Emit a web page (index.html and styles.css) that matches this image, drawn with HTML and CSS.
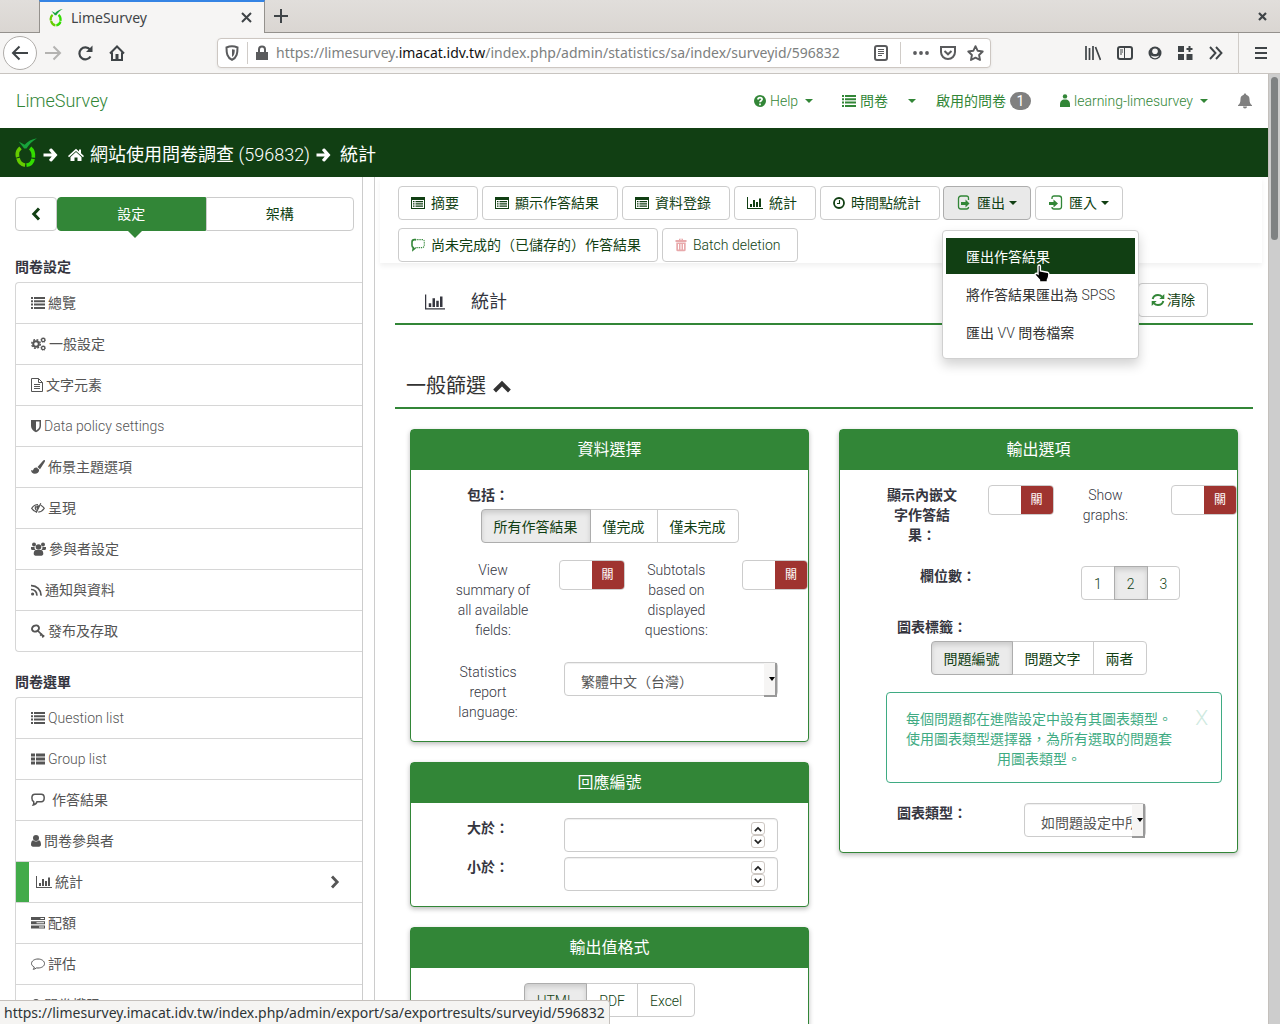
FILE: index.html
```html
<!DOCTYPE html>
<html lang="zh-Hant-TW">
<head>
<meta charset="utf-8">
<meta name="viewport" content="width=device-width, initial-scale=1">
<title>LimeSurvey</title>
<link rel="stylesheet" href="styles.css">
</head>
<body>
<svg class="sprite" aria-hidden="true">
  <symbol id="i-list" viewBox="0 0 14 14"><path d="M0 1h2v2H0zM3 1h11v2H3zM0 4.300h2v2H0zM3 4.300h11v2H3zM0 7.600h2v2H0zM3 7.600h11v2H3zM0 11h2v2H0zM3 11h11v2H3z"/></symbol>
  <symbol id="i-thlist" viewBox="0 0 14 14"><path d="M0 1.500h4v3H0zM5 1.500h9v3H5zM0 5.500h4v3H0zM5 5.500h9v3H5zM0 9.500h4v3H0zM5 9.500h9v3H5z"/></symbol>
  <symbol id="i-listalt" viewBox="0 0 14 14"><path fill-rule="evenodd" d="M0 1h14v12H0zM1 4v8h12V4zM2 5h1.500v1.300H2zM4.500 5H12v1.300H4.500zM2 7.200h1.500v1.300H2zM4.500 7.200H12v1.300H4.500zM2 9.400h1.500v1.300H2zM4.500 9.400H12v1.300H4.500z"/></symbol>
  <symbol id="i-bars" viewBox="0 0 16 14"><path d="M0 1h1v11h15v1H0zM3 8h2v3H3zM6 4h2v7H6zM9 6h2v5H9zM12 2.500h2V11h-2z"/></symbol>
  <symbol id="i-cogs" viewBox="0 0 15 14"><circle cx="5" cy="7" r="2.800" fill="none" stroke="currentColor" stroke-width="2"/><circle cx="5" cy="7" r="4.300" fill="none" stroke="currentColor" stroke-width="1.400" stroke-dasharray="1.900 1.480"/><circle cx="12.200" cy="3" r="1.700" fill="none" stroke="currentColor" stroke-width="1.300"/><circle cx="12.200" cy="11" r="1.700" fill="none" stroke="currentColor" stroke-width="1.300"/><circle cx="12.200" cy="3" r="2.500" fill="none" stroke="currentColor" stroke-width=".6" stroke-dasharray="1 .96"/><circle cx="12.200" cy="11" r="2.500" fill="none" stroke="currentColor" stroke-width=".6" stroke-dasharray="1 .96"/></symbol>
  <symbol id="i-file" viewBox="0 0 12 14"><path fill="none" stroke="currentColor" d="M.5.5h7l4 4v9H.5zM7.500.5v4h4M3 6.500h6M3 8.500h6M3 10.500h6"/></symbol>
  <symbol id="i-shield" viewBox="0 0 10 14"><path fill-rule="evenodd" d="M0 1h10v6c0 3-2.300 4.900-5 6.300C2.300 11.900 0 10 0 7zM5 2.500v9C7 10.200 8.500 9 8.500 7V2.500z"/></symbol>
  <symbol id="i-brush" viewBox="0 0 14 14"><path d="M13.800.2c.5.500 0 1.500-.3 2L9 9.200 6.500 7 12 .8c.5-.5 1.300-1.100 1.800-.6zM5.700 7.600l2.500 2.200c0 2.500-2 4-4.400 4C1.500 13.800.3 12.500 0 10c1 .7 2 .6 2.400-.4.500-1.300 1.700-2.300 3.300-2z"/></symbol>
  <symbol id="i-eye" viewBox="0 0 14 14"><path fill="none" stroke="currentColor" stroke-width="1.200" d="M5.500 11C3.500 10.500 1.800 9 .7 7.300 2.200 5 4.400 3.500 7 3.500M9.800 4.300c1.400.7 2.600 1.700 3.500 3-1.400 2.200-3.400 3.600-6 3.900M4.800 5.300c-1 1.900-.3 3.400 1.300 4.300M9.800 2.200l-4.600 9.600"/><path d="M5.600 4.600 8.600 4.200 6.800 8.500C5.300 7.700 4.800 6 5.600 4.600z"/></symbol>
  <symbol id="i-group" viewBox="0 0 15 14"><circle cx="3" cy="2.500" r="2"/><circle cx="12" cy="2.500" r="2"/><circle cx="7.500" cy="5" r="2.800"/><path d="M0 5h3.600C3.400 6.500 3.900 7.500 4.800 8H1.500C.4 8 0 7.400 0 6.500zM15 5h-3.600c.2 1.500-.3 2.500-1.200 3h3.300c1.100 0 1.500-.6 1.500-1.500zM4.700 8h5.600c1.600.5 2 2.400 2 3.800 0 1-.8 1.900-1.800 1.900h-6c-1 0-1.800-.9-1.800-1.900 0-1.400.4-3.300 2-3.800z"/></symbol>
  <symbol id="i-rss" viewBox="0 0 11 14"><circle cx="1.600" cy="11" r="1.600"/><path fill="none" stroke="currentColor" stroke-width="1.700" d="M0 6.500A5.500 5.500 0 0 1 5.800 12.600M0 2.700A9.500 9.500 0 0 1 10 12.600"/></symbol>
  <symbol id="i-key" viewBox="0 0 14 14"><ellipse cx="4.500" cy="4.500" rx="3.600" ry="3" fill="none" stroke="currentColor" stroke-width="1.900" transform="rotate(-30 4.500 4.500)"/><path fill="none" stroke="currentColor" stroke-width="1.700" d="M6.500 6.500l5.800 5.600M9.200 11.700l1.900-2M11.200 13.400l2-2"/></symbol>
  <symbol id="i-comment" viewBox="0 0 14 14"><path fill="none" stroke="currentColor" stroke-width="1.500" d="M4 1.300h6.200c2 0 3 1.400 3 3.500s-1 4-3 4H6c-.5 1.700-1.700 2.900-3.800 3.200.6-1.100.8-2.100.5-3.300C1.400 8 .9 6.600.9 5c0-2.300 1.200-3.700 3.100-3.700z"/></symbol>
  <symbol id="i-bubble" viewBox="0 0 14 14"><path fill="none" stroke="currentColor" d="M7 2c3.600 0 6.500 2 6.500 4.600S10.600 11 7 11c-.6 0-1 0-1.500-.1-1 .9-2 1.300-3.300 1.400.6-.7 1-1.300 1.100-2.200C1.600 9.200.5 8 .5 6.600.5 4 3.400 2 7 2z"/></symbol>
  <symbol id="i-user" viewBox="0 0 10 14"><circle cx="5" cy="4" r="3"/><path d="M2.200 6.300c1.700 1.600 3.900 1.600 5.600 0C9.500 6.700 10 8.700 10 10.600c0 1.300-.8 2.200-2 2.200H2c-1.200 0-2-.9-2-2.200 0-1.900.5-3.900 2.200-4.300z"/></symbol>
  <symbol id="i-tasks" viewBox="0 0 14 14"><path fill-rule="evenodd" d="M0 1h14v3H0zM9.500 2h3.500v1H9.500zM0 5.300h14v3H0zM5.500 6.300H13v1H5.500zM0 9.600h14v3H0zM8 10.600h5v1H8z"/></symbol>
  <symbol id="i-lock" viewBox="0 0 10 14"><path fill-rule="evenodd" d="M1.500 6V4.500a3.500 3.500 0 0 1 7 0V6H10v7H0V6zM3.500 6h3V4.500a1.500 1.500 0 0 0-3 0z"/></symbol>
  <symbol id="i-clock" viewBox="0 0 12 14"><circle cx="6" cy="7" r="5" fill="none" stroke="currentColor" stroke-width="1.800"/><path fill="none" stroke="currentColor" stroke-width="1.100" d="M6.500 4v3.500H4"/></symbol>
  <symbol id="i-export" viewBox="0 0 14 16"><path fill="none" stroke="currentColor" stroke-width="1.300" d="M11.500 5V3c0-1.300-.8-2-2-2H4C2.500 1 1.500 2 1.500 3.500v8C1.500 13 2.500 14 4 14h5.500c1.200 0 2-.7 2-2"/><path d="M4 7h4.500V4.500L12.500 8.500l-4 4V10H4z"/></symbol>
  <symbol id="i-import" viewBox="0 0 14 16"><path fill="none" stroke="currentColor" stroke-width="1.300" d="M3 4V3c0-1.300.8-2 2-2h5c1.500 0 2.500 1 2.500 2.500v8c0 1.500-1 2.500-2.500 2.500H5c-1.200 0-2-.7-2-2"/><path d="M0 7h4.500V4.500L9 8.500l-4.500 4V10H0z"/></symbol>
  <symbol id="i-dashed" viewBox="0 0 14 14"><path fill="none" stroke="currentColor" stroke-width="1.600" d="M5 1.600H3.500C1.700 1.600 1 2.500 1 4v3.500c0 1 .5 1.700 1.300 2L2 12l2.500-2"/><path fill="none" stroke="currentColor" stroke-width="1.200" stroke-dasharray="1.300 .9" d="M4 1.600h7.500c1 0 1.800.9 1.800 2V7c0 1-.6 2.500-1.800 2.700H4"/></symbol>
  <symbol id="i-trash" viewBox="0 0 12 14"><path fill-rule="evenodd" d="M1 2h3V.8h4V2h3.500v2H.5V2zM5 2h2v-.4H5zM1.300 4.500h9.400V12c0 .7-.5 1.200-1.200 1.200h-7c-.7 0-1.200-.5-1.200-1.200zM3 6v5.500h1V6zM5.500 6v5.500h1V6zM8 6v5.500h1V6z"/></symbol>
  <symbol id="i-refresh" viewBox="0 0 14 14"><path fill="none" stroke="currentColor" stroke-width="2" d="M1.700 6C2.300 3.500 4.400 2 7 2c1.700 0 3 .6 4 1.700M12.300 8c-.6 2.500-2.700 4-5.300 4-1.700 0-3-.6-4-1.700"/><path d="M13.300 1v5h-5zM.7 13V8h5z"/></symbol>
  <symbol id="i-home" viewBox="0 0 16 14"><path d="M8 .8l3 2.700V1.500h2v3.800l3 2.700-1 1.200-7-6.200-7 6.200L0 8z"/><path d="M8 4l5.500 4.900V13H9.500V9.500h-3V13h-4V8.900z"/></symbol>
  <symbol id="i-arrow" viewBox="0 0 14 14"><path d="M6.500.8 8.200.6 14 7l-5.800 6.400-1.700-.2-1-1.500L8.200 8.500H0v-3h8.200L5.500 2.300z"/></symbol>
  <symbol id="i-left" viewBox="0 0 10 14"><path fill="none" stroke="currentColor" stroke-width="3" d="M8 1.500 2.800 7 8 12.500"/></symbol>
  <symbol id="i-right" viewBox="0 0 10 14"><path fill="none" stroke="currentColor" stroke-width="2.800" d="M2 1.500 7.200 7 2 12.500"/></symbol>
  <symbol id="i-up" viewBox="0 0 18 14"><path fill="none" stroke="currentColor" stroke-width="4" d="M1.600 12 9 4.500 16.400 12"/></symbol>
  <symbol id="i-question" viewBox="0 0 12 14"><circle cx="6" cy="7" r="6"/><path fill="none" stroke="#fff" stroke-width="1.700" d="M3.800 5.500c.2-1.300 1-1.900 2.200-1.900 1.300 0 2.100.7 2.100 1.700C8.100 6.700 6 6.700 6 8.300M6 9.500v1.700"/></symbol>
  <symbol id="i-person" viewBox="0 0 10 14"><circle cx="5" cy="2.400" r="2.200"/><path d="M0 13v-2.500C0 7.500 1.500 5.500 5 5.500s5 2 5 5V13z"/></symbol>
  <symbol id="i-bell" viewBox="0 0 14 16"><path d="M7 .5c.7 0 1.200.5 1.200 1.200C10.300 2.300 11.500 4 11.500 6c0 3.500.8 5 2.500 6.300v.7H0v-.7C1.700 11 2.500 9.500 2.500 6c0-2 1.200-3.700 3.300-4.300C5.800 1 6.300.5 7 .5zM5 13.500h4c0 1.300-.8 2-2 2s-2-.7-2-2z"/></symbol>
  <symbol id="i-lime" viewBox="0 0 24 32"><g fill="none" stroke-width="4"><path stroke="#6c0" d="M6 10.500C3 13 2 17 3 20.500M3.300 21.500C4.300 26 7 28.600 11 29.300"/><path stroke="#3d0" d="M12.500 29.300c4-.5 6.500-3 7.300-7M20 21c.5-4.500-.3-8-3.500-10.500"/></g><path fill="#17a43b" d="M4 3.500 10.500 7C14 3.500 18 1 24 0c-5 3-8.500 6.500-11.500 11H10z"/></symbol>
</svg>

<header class="browser">
  <div class="tabstrip">
    <div class="tab"><svg class="fav"><use href="#i-lime"/></svg><span>LimeSurvey</span>
      <button class="bare" aria-label="Close tab"><svg width="11" height="11" viewBox="0 0 11 11"><path fill="none" stroke="currentColor" stroke-width="2" d="M1 1l9 9M10 1l-9 9"/></svg></button></div>
    <button class="bare newtab" aria-label="New tab"><svg width="14" height="14" viewBox="0 0 14 14"><path d="M6 0h2v6h6v2H8v6H6V8H0V6h6z"/></svg></button>
    <button class="bare winclose" aria-label="Close window"><svg width="9" height="9" viewBox="0 0 9 9"><path fill="none" stroke="currentColor" stroke-width="2.200" d="M1 1l7 7M8 1 1 8"/></svg></button>
  </div>
  <div class="toolbar">
    <button class="bare back" aria-label="Back"><svg width="18" height="16" viewBox="0 0 18 16"><path fill="none" stroke="currentColor" stroke-width="2" d="M17 8H2M8.500 1.500 2 8l6.500 6.500"/></svg></button>
    <button class="bare fwd" aria-label="Forward"><svg width="18" height="16" viewBox="0 0 18 16"><path fill="none" stroke="currentColor" stroke-width="2" d="M1 8h15M9.500 1.500 16 8l-6.500 6.500"/></svg></button>
    <button class="bare reload" aria-label="Reload"><svg width="16" height="16" viewBox="0 0 16 16"><path fill="none" stroke="currentColor" stroke-width="2.200" d="M13.500 11.500A6 6 0 1 1 13 4.500"/><path d="M15.500.5V7H9z"/></svg></button>
    <button class="bare house" aria-label="Home"><svg width="16" height="16" viewBox="0 0 16 16"><path fill="none" stroke="currentColor" stroke-width="2" d="M1 8.500 8 1.500l7 7M3 7.500V15h10V7.500"/><path d="M6.500 9h3v6h-3z"/></svg></button>
    <div class="urlbar">
      <svg width="14" height="16" viewBox="0 0 14 16"><path fill="none" stroke="currentColor" stroke-width="2" d="M1.500 2.500C5 1 9 1 12.500 2.500 12.500 8 12 12.500 7 14.800 2 12.500 1.500 8 1.500 2.500z"/><path d="M7 4.200c1 0 2 .2 2.800.5C9.700 8 9.300 10.500 7 12z"/></svg>
      <i class="vline"></i>
      <svg width="12" height="16" viewBox="0 0 12 16"><path fill-rule="evenodd" d="M2 7V4.500a4 4 0 0 1 8 0V7h2v8H0V7zM4 7h4V4.500a2 2 0 0 0-4 0z"/></svg>
      <span class="url">https://limesurvey.<b>imacat.idv.tw</b>/index.php/admin/statistics/sa/index/surveyid/596832</span>
      <svg width="14" height="16" viewBox="0 0 14 16"><path fill="none" stroke="currentColor" stroke-width="2" d="M1 3a2 2 0 0 1 2-2h8a2 2 0 0 1 2 2v10a2 2 0 0 1-2 2H3a2 2 0 0 1-2-2z"/><path fill="none" stroke="currentColor" d="M4 4.500h6M4 6.500h6M4 8.500h6M4 10.500h4"/></svg>
      <i class="vline roomy"></i>
      <svg width="16" height="16" viewBox="0 0 16 16"><circle cx="2" cy="8" r="1.900"/><circle cx="8" cy="8" r="1.900"/><circle cx="14" cy="8" r="1.900"/></svg>
      <svg class="pocket" width="16" height="16" viewBox="0 0 16 16"><path fill="none" stroke="currentColor" stroke-width="2" d="M1 2h14v5a7 7 0 0 1-14 0z"/><path fill="none" stroke="currentColor" stroke-width="2" d="M4.500 6 8 9.300 11.500 6"/></svg>
      <svg width="17" height="16" viewBox="0 0 17 16"><path fill="none" stroke="currentColor" stroke-width="1.900" stroke-linejoin="round" d="M8.500 1.200l2.200 4.600 5 .7-3.600 3.500.9 5-4.500-2.400L4 15l.9-5L1.300 6.500l5-.7z"/></svg>
    </div>
    <div class="tools">
      <svg width="16" height="16" viewBox="0 0 16 16"><path fill="none" stroke="currentColor" stroke-width="1.700" d="M1 1v14M4.500 3v12M8 1v14M10.500 2l5 13"/></svg>
      <svg width="16" height="16" viewBox="0 0 16 16"><rect x="1" y="2" width="14" height="12" rx="2" fill="none" stroke="currentColor" stroke-width="2"/><path fill="none" stroke="currentColor" d="M7.500 2v12M3 5h3M3 7h3M3 9h2"/></svg>
      <svg width="14" height="16" viewBox="0 0 14 16"><circle cx="7" cy="8" r="6.500"/><circle cx="7" cy="6.200" r="2.800" fill="#f6f5f4"/><path fill="#f6f5f4" d="M2.800 10.500c2.500 1.300 6 1.300 8.400 0-1 1.800-2.500 2.700-4.200 2.700s-3.200-.9-4.200-2.700z"/></svg>
      <svg width="15" height="16" viewBox="0 0 15 16"><path d="M0 1h6v6H0zM0 9h6v6H0zM8.500 9h6v6h-6zM10.500 1h2v2h2v2h-2v2h-2V5h-2V3h2z"/></svg>
      <svg width="14" height="16" viewBox="0 0 14 16"><path fill="none" stroke="currentColor" stroke-width="1.900" d="M1 2l5.500 6L1 14M7 2l5.500 6L7 14"/></svg>
      <i class="vline tall"></i>
      <svg width="12" height="16" viewBox="0 0 12 16"><path d="M0 2h12v2H0zM0 7h12v2H0zM0 12h12v2H0z"/></svg>
    </div>
  </div>
</header>

<div class="viewport">
<div class="page">
  <nav class="topnav">
    <a class="brand thin" href="#">LimeSurvey</a>
    <a class="help thin" href="#"><svg class="w12"><use href="#i-question"/></svg>Help<i class="caret"></i></a>
    <a class="surveys" href="#"><svg class="w16"><use href="#i-list"/></svg>問卷</a>
    <a class="more" href="#" aria-label="更多"><i class="caret"></i></a>
    <a class="active-surveys" href="#">啟用的問卷<span class="badge">1</span></a>
    <a class="account thin" href="#"><svg class="w10"><use href="#i-person"/></svg>learning-limesurvey<i class="caret"></i></a>
    <a class="bell" href="#" aria-label="通知"><svg><use href="#i-bell"/></svg></a>
  </nav>
  <div class="crumbs">
    <svg class="logo"><use href="#i-lime"/></svg>
    <svg class="arrow"><use href="#i-arrow"/></svg>
    <a href="#"><svg class="w16"><use href="#i-home"/></svg><span>網站使用問卷調查 <span class="thin">(596832)</span></span></a>
    <svg class="arrow"><use href="#i-arrow"/></svg>
    <span class="here">統計</span>
  </div>

  <div class="columns">
    <aside class="side">
      <div class="side-top">
        <button class="btn collapse" aria-label="收合"><svg class="w10"><use href="#i-left"/></svg></button>
        <div class="side-tabs"><button class="on">設定</button><button>架構</button></div>
      </div>
      <h2>問卷設定</h2>
      <ul class="menu">
        <li><a href="#"><svg class="w14"><use href="#i-list"/></svg>總覽</a></li>
        <li><a href="#"><svg class="w15"><use href="#i-cogs"/></svg>一般設定</a></li>
        <li><a href="#"><svg class="w12"><use href="#i-file"/></svg>文字元素</a></li>
        <li><a class="thin" href="#"><svg class="w10"><use href="#i-shield"/></svg>Data policy settings</a></li>
        <li><a href="#"><svg class="w14"><use href="#i-brush"/></svg>佈景主題選項</a></li>
        <li><a href="#"><svg class="w14"><use href="#i-eye"/></svg>呈現</a></li>
        <li><a href="#"><svg class="w15"><use href="#i-group"/></svg>參與者設定</a></li>
        <li><a href="#"><svg class="w11"><use href="#i-rss"/></svg>通知與資料</a></li>
        <li><a href="#"><svg class="w14"><use href="#i-key"/></svg>發布及存取</a></li>
      </ul>
      <h2>問卷選單</h2>
      <ul class="menu">
        <li><a class="thin" href="#"><svg class="w14"><use href="#i-list"/></svg>Question list</a></li>
        <li><a class="thin" href="#"><svg class="w14"><use href="#i-thlist"/></svg>Group list</a></li>
        <li><a class="wide-gap" href="#"><svg class="w14"><use href="#i-comment"/></svg>作答結果</a></li>
        <li><a href="#"><svg class="w10"><use href="#i-user"/></svg>問卷參與者</a></li>
        <li class="current"><a href="#"><svg class="w16"><use href="#i-bars"/></svg>統計<svg class="w10 go"><use href="#i-right"/></svg></a></li>
        <li><a href="#"><svg class="w14"><use href="#i-tasks"/></svg>配額</a></li>
        <li><a href="#"><svg class="w14"><use href="#i-bubble"/></svg>評估</a></li>
        <li><a href="#"><svg class="w10"><use href="#i-lock"/></svg>問卷權限</a></li>
      </ul>
    </aside>
    <div class="handle"></div>

    <main class="main">
      <div class="actions">
        <button class="btn"><svg class="w14"><use href="#i-listalt"/></svg>摘要</button>
        <button class="btn"><svg class="w14"><use href="#i-listalt"/></svg>顯示作答結果</button>
        <button class="btn"><svg class="w14"><use href="#i-listalt"/></svg>資料登錄</button>
        <button class="btn"><svg class="w16"><use href="#i-bars"/></svg>統計</button>
        <button class="btn"><svg class="w12"><use href="#i-clock"/></svg>時間點統計</button>
        <div class="drop">
          <button class="btn menu-btn open"><svg class="w14 tallicon green"><use href="#i-export"/></svg>匯出<i class="caret"></i></button>
          <div class="dropdown">
            <a class="hover" href="#">匯出作答結果</a>
            <a href="#">將作答結果匯出為 <span class="thin">SPSS</span></a>
            <a href="#">匯出 <span class="thin">VV</span> 問卷檔案</a>
            <svg class="pointer" width="16" height="19" viewBox="0 0 16 19"><path fill="#000" stroke="#fff" stroke-width="1.400" d="M4 2.200C4 1.300 4.600 1 5.200 1s1.200.4 1.200 1.200V7l7 1.200c1 .3 1.500 1 1.500 2 0 2.500-.5 4-1.500 5.600V18H5.500v-2L1.500 11.500C.7 10.500 1 9.300 2.200 9.200c.7 0 1.200.3 1.800.8z"/></svg>
          </div>
        </div>
        <button class="btn menu-btn"><svg class="w14 tallicon green"><use href="#i-import"/></svg>匯入<i class="caret"></i></button>
        <button class="btn snug"><svg class="w14 green"><use href="#i-dashed"/></svg>尚未完成的（已儲存的）作答結果</button>
        <button class="btn snug thin"><svg class="w12 pink"><use href="#i-trash"/></svg>Batch deletion</button>
      </div>

      <div class="content">
        <div class="heading"><h1><svg><use href="#i-bars"/></svg>統計</h1>
          <button class="btn clear"><svg class="w14 green"><use href="#i-refresh"/></svg>清除</button></div>
        <h2 class="filter">一般篩選<svg><use href="#i-up"/></svg></h2>

        <div class="cards">
          <div class="stack">
            <section class="card">
              <h3>資料選擇</h3>
              <div class="body">
                <div class="lone">包括：</div>
                <div class="group" role="radiogroup" aria-label="包括">
                  <label><input type="radio" name="inc" checked>所有作答結果</label><label><input type="radio" name="inc">僅完成</label><label><input type="radio" name="inc">僅未完成</label>
                </div>
                <div class="pair spaced">
                  <label class="name thin" for="sum">View summary of all available fields:</label>
                  <span class="switch"><input type="checkbox" id="sum"><span>關</span></span>
                  <label class="name thin" for="sub">Subtotals based on displayed questions:</label>
                  <span class="switch"><input type="checkbox" id="sub"><span>關</span></span>
                </div>
                <div class="field report">
                  <label class="name thin" for="lang">Statistics report language:</label>
                  <span class="select"><select id="lang"><option>繁體中文（台灣）</option></select></span>
                </div>
              </div>
            </section>
            <section class="card">
              <h3>回應編號</h3>
              <div class="body ids">
                <div class="field"><label class="name" for="gt">大於：</label><span class="number"><input type="number" id="gt"><span class="spin"><button aria-label="增加"><svg><use href="#i-up"/></svg></button><button class="down" aria-label="減少"><svg><use href="#i-up"/></svg></button></span></span></div>
                <div class="field"><label class="name" for="lt">小於：</label><span class="number"><input type="number" id="lt"><span class="spin"><button aria-label="增加"><svg><use href="#i-up"/></svg></button><button class="down" aria-label="減少"><svg><use href="#i-up"/></svg></button></span></span></div>
              </div>
            </section>
            <section class="card">
              <h3>輸出值格式</h3>
              <div class="body">
                <div class="group thin" role="radiogroup" aria-label="輸出值格式">
                  <label><input type="radio" name="fmt" checked>HTML</label><label><input type="radio" name="fmt">PDF</label><label><input type="radio" name="fmt">Excel</label>
                </div>
              </div>
            </section>
          </div>
          <section class="card">
            <h3>輸出選項</h3>
            <div class="body">
              <div class="pair">
                <label class="name bold" for="inline">顯示內嵌文字作答結果：</label>
                <span class="switch"><input type="checkbox" id="inline"><span>關</span></span>
                <label class="name thin" for="graphs">Show graphs:</label>
                <span class="switch"><input type="checkbox" id="graphs"><span>關</span></span>
              </div>
              <div class="cols">
                <div class="bold">欄位數：</div>
                <div class="group thin" role="radiogroup" aria-label="欄位數">
                  <label><input type="radio" name="cols">1</label><label><input type="radio" name="cols" checked>2</label><label><input type="radio" name="cols">3</label>
                </div>
              </div>
              <div class="lone wide">圖表標籤：</div>
              <div class="group" role="radiogroup" aria-label="圖表標籤">
                <label><input type="radio" name="lab" checked>問題編號</label><label><input type="radio" name="lab">問題文字</label><label><input type="radio" name="lab">兩者</label>
              </div>
              <div class="alert"><p>每個問題都在進階設定中設有其圖表類型。使用圖表類型選擇器，為所有選取的問題套用圖表類型。</p><button class="thin" aria-label="關閉">X</button></div>
              <div class="type">
                <label class="bold" for="ctype">圖表類型：</label>
                <span class="select"><select id="ctype"><option>如問題設定中所示</option></select></span>
              </div>
            </div>
          </section>
        </div>
      </div>
    </main>
  </div>
</div>
<div class="scrollbar"><div class="thumb"></div></div>
<div class="status">https://limesurvey.imacat.idv.tw/index.php/admin/export/sa/exportresults/surveyid/596832</div>
</div>
</body>
</html>
```
FILE: styles.css
```css
* { box-sizing: border-box; }
body {
  margin: 0;
  height: 100vh;
  display: flex;
  flex-direction: column;
  overflow: hidden;
  font: 400 14px/20px Roboto, "Noto Sans CJK TC", sans-serif;
  color: #35363f;
  background: #fff;
}
h1, h2, h3, p, ul { margin: 0; padding: 0; }
a { color: inherit; text-decoration: none; }
button, input, select { font: inherit; color: inherit; margin: 0; }
svg { fill: currentColor; flex: none; }
.sprite { position: absolute; width: 0; height: 0; }
.bare { border: 0; background: none; padding: 0; display: flex; align-items: center; justify-content: center; }
.thin { font-weight: 300; }
.bold { font-weight: 700; }

/* icon widths */
.w10, .w11, .w12, .w14, .w15, .w16 { height: 14px; }
.w10 { width: 10px; }
.w11 { width: 11px; }
.w12 { width: 12px; }
.w14 { width: 14px; }
.w15 { width: 15px; }
.w16 { width: 16px; }
.tallicon { height: 16px; }
.green { color: #328637; }
.pink { color: #e8a9ab; }
.caret { border: 4px solid transparent; border-top-color: currentColor; border-bottom: 0; margin-left: 6px; }

/* browser window */
.browser { font-family: "Noto Sans", sans-serif; font-size: 14px; color: #3f4447; flex: none; }
.tabstrip { height: 33px; display: flex; padding-left: 39px; background: linear-gradient(#e1dedb, #dad6d2); border-bottom: 1px solid #94918d; }
.tab {
  width: 226px; height: 33px; display: flex; align-items: center; gap: 8px; padding: 0 12px 0 9px;
  background: #f6f5f4; border: 1px solid #94918d; border-top: 2px solid #3584e4; border-bottom: 0;
}
.tab span { flex: 1; }
.fav { width: 14px; height: 18px; }
.newtab { margin-left: 8px; width: 16px; }
.winclose { margin-left: auto; width: 36px; }
.toolbar { height: 41px; display: flex; align-items: center; padding: 0 13px 0 3px; background: #f6f5f4; border-bottom: 1px solid #c8c4c0; }
.back { width: 34px; height: 34px; border: 1px solid #b0adaa; border-radius: 50%; background: #fff; }
.fwd { width: 18px; margin-left: 7px; color: #b4b3b1; }
.reload { margin-left: 15px; }
.house { margin-left: 16px; }
.urlbar {
  flex: 1; height: 30px; margin-left: 92px; padding: 0 6px 0 7px; display: flex; align-items: center;
  border: 1px solid #cdc7c2; border-radius: 4px; background: #fff; color: #5a5b5d; box-shadow: 0 1px 3px #0001;
}
.vline { width: 1px; height: 22px; background: #d0ccc8; margin: 0 8px; }
.roomy { margin: 0 12px; }
.pocket { margin: 0 11px; }
.url { flex: 1; min-width: 0; margin-left: 8px; color: #7d7f80; white-space: nowrap; overflow: hidden; }
.url b { font-weight: 400; color: #111; }
.tools { display: flex; align-items: center; justify-content: space-between; width: 182px; margin-left: 94px; }
.tall { height: 41px; margin: 0; }

.viewport { flex: 1; min-height: 0; display: flex; position: relative; }
.page { flex: 1; min-width: 0; overflow: hidden; }
.scrollbar { width: 12px; padding: 3px 2px; background: #cdcdcd; border-left: 1px solid #c4c0bc; }
.thumb { height: 163px; border-radius: 4px; background: #7f8283; }
.status {
  position: absolute; left: 0; bottom: 0; z-index: 5; height: 24px; padding: 0 4px; line-height: 24px;
  font-family: "Noto Sans", sans-serif; color: #2e3436; background: #f5f4f2;
  border: 1px solid #c5c0bc; border-width: 1px 1px 0 0; border-radius: 0 3px 0 0; white-space: nowrap;
}

/* page header */
.topnav { height: 54px; display: flex; align-items: center; padding: 0 16px; color: #328637; }
.topnav a { display: flex; align-items: center; gap: 4px; }
.topnav .caret { margin-left: 3px; }
.topnav .brand { font-size: 18px; margin-right: auto; }
.topnav .surveys { margin-left: 28px; gap: 3px; }
.more { margin-left: 16px; }
.topnav .more .caret { margin-left: 4px; }
.active-surveys { margin-left: 20px; }
.badge { background: #808080; color: #fff; border-radius: 10px; line-height: 18px; width: 21px; text-align: center; }
.account { margin-left: 29px; }
.bell { margin-left: 30px; color: #808080; }
.bell svg { width: 14px; height: 16px; }
.crumbs { height: 49px; display: flex; align-items: center; padding: 4px 15px 0; gap: 6px; font-size: 18px; color: #fff; background: #113f13; }
.crumbs a { display: flex; align-items: center; gap: 6px; margin-left: 4px; }
.logo { width: 22px; height: 32px; margin-top: -4px; }
.arrow { width: 15px; height: 14px; }
.here { margin-left: 3px; }

/* side menu */
.columns { display: flex; align-items: stretch; }
.side { width: 362px; padding: 20px 0 0 15px; flex: none; }
.side-top { display: flex; margin-right: 8px; height: 34px; }
.btn {
  display: inline-flex; align-items: center; height: 34px; padding: 0 18px 0 12px; gap: 6px;
  background: #fff; border: 1px solid #ccc; border-radius: 4px; color: #113f13; white-space: nowrap;
}
.collapse { width: 42px; padding: 0; justify-content: center; }
.side-tabs { flex: 1; display: flex; }
.side-tabs button { flex: 1; padding: 0; background: #fff; border: 1px solid #ccc; border-radius: 0 4px 4px 0; color: #113f13; }
.side-tabs .on { background: #328637; border-color: #328637; border-radius: 4px 0 0 4px; color: #fff; position: relative; }
.side-tabs .on::after {
  content: ""; position: absolute; left: 50%; top: 100%; margin-left: -4px;
  border: 8px solid transparent; border-top-color: #328637; border-bottom: 0;
}
.side h2 { font-size: 14px; line-height: 20px; font-weight: 700; margin: 26px 0 5px; }
.menu { list-style: none; border: 1px solid #d6d6d6; border-right: 0; border-radius: 4px 0 0 4px; margin-bottom: 20px; }
.menu li + li { border-top: 1px solid #d6d6d6; }
.side .menu + h2 { margin-top: 0; }
.menu a { display: flex; align-items: center; gap: 3px; height: 40px; padding: 0 22px 0 15px; color: #555; }
.menu .wide-gap { gap: 7px; }
.menu .current a { border-left: 13px solid #42ab4a; padding-left: 7px; }
.go { margin-left: auto; }
.handle { width: 13px; border: 1px solid #ccc; border-width: 0 1px; flex: none; }

/* main area */
.main { flex: 1; min-width: 0; padding: 0 6px 0 5px; }
.actions { display: flex; flex-wrap: wrap; gap: 8px 4px; padding: 9px 18px 1px; box-shadow: 0 3px 5px #0000000f; }
.actions .menu-btn { padding: 0 13px; }
.actions .menu-btn .caret { margin-left: -2px; }
.actions .open { background: #e9e9e9; border-color: #adadad; }
.actions .snug { padding-right: 16px; }
.drop { position: relative; margin-left: -1px; }
.dropdown {
  position: absolute; left: -1px; top: 44px; z-index: 2; width: 197px; padding: 7px 3px 6px;
  background: #fff; border: 1px solid #d0d0d0; border-radius: 4px; box-shadow: 0 6px 12px #0000002d;
}
.dropdown a { display: block; height: 36px; line-height: 38px; margin-bottom: 2px; padding: 0 20px; white-space: nowrap; color: #333; }
.dropdown a.hover { background: #113f13; color: #fff; }
.pointer { position: absolute; left: 91px; top: 33px; }
.content { padding: 20px 9px 0 15px; }
.heading { display: flex; justify-content: space-between; padding-bottom: 6px; padding-right: 45px; border-bottom: 2px solid #328637; }
.heading h1 { display: flex; align-items: center; gap: 26px; padding: 4px 0 0 30px; font-size: 18px; font-weight: 400; }
.heading h1 svg { width: 20px; height: 18px; }
.heading .btn { padding: 0 12px; gap: 2px; }
.filter { display: flex; align-items: center; gap: 7px; padding: 45px 11px 5px; font-size: 20px; line-height: 32px; font-weight: 400; color: #333; border-bottom: 2px solid #328637; }
.filter svg { width: 18px; height: 14px; }

/* cards */
.cards { display: grid; grid-template-columns: 1fr 1fr; gap: 30px; align-items: start; padding: 20px 15px; }
.stack { display: grid; gap: 20px; }
.card { border: 1px solid #328637; border-radius: 4px; background: #fff; box-shadow: 0 2px 5px #0004; min-width: 0; }
.card h3 { height: 40px; line-height: 40px; font-size: 16px; font-weight: 400; text-align: center; color: #fff; background: #328637; }
.body { padding: 15px 0; text-align: center; }
.lone { width: 154px; font-weight: 700; margin-bottom: 4px; }
.lone.wide { width: 184px; margin-top: 17px; }
.group { display: flex; justify-content: center; }
.group label { height: 34px; line-height: 34px; padding: 0 12px; border: 1px solid #ccc; color: #113f13; position: relative; }
.group label + label { margin-left: -1px; }
.group label:first-child { border-radius: 4px 0 0 4px; }
.group label:last-child { border-radius: 0 4px 4px 0; }
.group label:has(:checked) { background: #ebebeb; border-color: #adadad; box-shadow: inset 0 3px 5px #0002; z-index: 1; }
.group input { position: absolute; opacity: 0; width: 1px; height: 1px; }
.pair { display: grid; grid-template-columns: 104fr 80fr 104fr 65fr; padding-left: 44px; align-items: start; }
.name { width: 76px; }
.spaced { margin-top: 17px; margin-bottom: 22px; }
.switch { display: block; width: 66px; height: 30px; border: 1px solid #ccc; border-radius: 4px; position: relative; overflow: hidden; background: #fff; }
.switch input { position: absolute; inset: 0; width: 100%; height: 100%; opacity: 0; }
.switch span { display: block; margin-left: 32px; line-height: 28px; font-size: 12px; color: #fff; background: #9f3430; }
.field { display: grid; grid-template-columns: 114px 1fr; padding: 0 30px 0 39px; align-items: start; }
.report { height: 64px; }
.ids { display: grid; gap: 5px; }
.ids .name { font-weight: 700; }
.select, .number { display: block; position: relative; }
.select select, .number input {
  width: 100%; height: 34px; border: 1px solid #ccc; border-radius: 4px; background: #fff; color: #555;
  box-shadow: inset 0 1px 1px #0001; appearance: none; display: block;
}
.select select { padding: 5px 12px 0 16px; }
.number input { appearance: textfield; padding: 6px 12px; }
.select::before { content: ""; position: absolute; right: 1px; top: 1px; width: 11px; height: 32px; background: #f6f5f4; border: 2px solid #999; border-width: 0 2px 2px 0; }
.select::after { content: ""; position: absolute; right: 3px; top: 15px; border: 3px solid transparent; border-top: 4px solid #000; border-bottom: 0; }
.spin { position: absolute; right: 13px; top: 4px; display: grid; }
.spin button { width: 14px; height: 13px; padding: 0; border: 1px solid #cdc7c2; border-radius: 3px; background: #fff; display: flex; align-items: center; justify-content: center; color: #222; }
.spin svg { width: 8px; height: 6px; }
.spin .down svg { transform: rotate(180deg); }
.cols { display: grid; grid-template-columns: 216px 1fr; margin-top: 21px; }
.cols .group { justify-content: flex-start; padding-left: 25px; }
.alert { display: flex; align-items: flex-start; margin: 17px 15px 20px 46px; padding: 16px 13px 13px 17px; border: 1px solid #3fab83; border-radius: 4px; color: #3fab83; }
.alert p { flex: 1; padding-right: 21px; }
.alert button { border: 0; background: none; padding: 0; font-size: 21px; color: #cfeadf; line-height: 18px; }
.type { display: grid; grid-template-columns: 184px 122px; }
```
